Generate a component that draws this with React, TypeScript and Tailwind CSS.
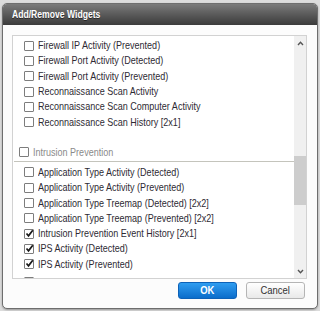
import React from "react";

const font = { fontFamily: '"Liberation Sans", Arial, sans-serif' };

function Box({ checked }: { checked?: boolean }) {
  return (
    <span className="relative w-[10px] h-[10px] shrink-0 border border-[#7d7d7d] rounded-[1px] bg-white">
      {checked && (
        <svg className="absolute left-[0px] top-[-1px]" width="9" height="9" viewBox="0 0 9 9">
          <path d="M1.5 4.5 L3.5 6.8 L7.8 1.2" fill="none" stroke="#1a1a1a" strokeWidth="1.7" />
        </svg>
      )}
    </span>
  );
}

function Row({ label, checked }: { label?: string; checked?: boolean }) {
  return (
    <div className="h-[15.3px] flex items-center pl-[10.5px] gap-[4px] text-[11px] text-[#2e2a33] whitespace-nowrap">
      <Box checked={checked} />
      {label && <span className="leading-none inline-block origin-left scale-x-[0.82]">{label}</span>}
    </div>
  );
}

const sec1 = [
  "Firewall IP Activity (Prevented)",
  "Firewall Port Activity (Detected)",
  "Firewall Port Activity (Prevented)",
  "Reconnaissance Scan Activity",
  "Reconnaissance Scan Computer Activity",
  "Reconnaissance Scan History [2x1]",
];

const sec2: [string, boolean][] = [
  ["Application Type Activity (Detected)", false],
  ["Application Type Activity (Prevented)", false],
  ["Application Type Treemap (Detected) [2x2]", false],
  ["Application Type Treemap (Prevented) [2x2]", false],
  ["Intrusion Prevention Event History [2x1]", true],
  ["IPS Activity (Detected)", true],
  ["IPS Activity (Prevented)", true],
];

export default function App() {
  return (
    <div className="w-[320px] h-[311px] bg-[#dcdcdc] pl-[2px] pt-[3px]" style={font}>
      <div className="w-[316px] h-[306px] rounded-[5px] border border-[#6e6e6e] bg-[#fcfcfc] overflow-hidden flex flex-col shadow-[0_1px_2px_rgba(0,0,0,0.3)]">
        <div className="h-[21px] shrink-0 bg-gradient-to-b from-[#7b7b7b] to-[#3b3b3b] flex items-center pl-[9px]">
          <span className="text-white font-bold text-[10px] inline-block origin-left scale-x-[0.86] [text-shadow:0_1px_0_rgba(0,0,0,0.5)]">
            Add/Remove Widgets
          </span>
        </div>
        <div className="ml-[9px] mt-[10px] w-[295px] h-[244px] border border-[#d2d2d2] bg-white flex overflow-hidden">
          <div className="flex-1 overflow-hidden pt-[2px]">
            {sec1.map((l) => (
              <Row key={l} label={l} />
            ))}
            <div className="mt-[14px] ml-[1px] h-[18px] border-b border-[#c4c4bc] flex items-center pl-[5px] gap-[4px] text-[11px] text-[#8a8a8a] whitespace-nowrap">
              <Box />
              <span className="leading-none inline-block origin-left scale-x-[0.82]">Intrusion Prevention</span>
            </div>
            <div className="pt-[3px]">
              {sec2.map(([l, c]) => (
                <Row key={l} label={l} checked={c} />
              ))}
              <div className="pt-[2px]">
                <Row />
              </div>
            </div>
          </div>
          <div className="w-[12px] shrink-0 bg-[#f0f0f0] flex flex-col">
            <div className="h-[14px] flex items-center justify-center">
              <svg width="7" height="5" viewBox="0 0 7 5">
                <path d="M1 4 L3.5 1.3 L6 4" fill="none" stroke="#555" strokeWidth="1.4" />
              </svg>
            </div>
            <div className="h-[106px]" />
            <div className="h-[49px] bg-[#cdcdcd]" />
            <div className="flex-1" />
            <div className="h-[14px] flex items-center justify-center">
              <svg width="7" height="5" viewBox="0 0 7 5">
                <path d="M1 1 L3.5 3.7 L6 1" fill="none" stroke="#555" strokeWidth="1.4" />
              </svg>
            </div>
          </div>
        </div>
        <div className="flex justify-end gap-[9px] pr-[12px] mt-[3px]">
          <button className="w-[59px] h-[17px] rounded-[3px] border border-[#0d62b8] bg-gradient-to-b from-[#2f9df0] to-[#0a6dcb] text-white font-bold text-[11px] leading-none">
            <span className="inline-block scale-x-[0.86]">OK</span>
          </button>
          <button className="w-[59px] h-[17px] rounded-[3px] border border-[#b5b5b5] bg-gradient-to-b from-white to-[#e9e9e9] text-[#333] text-[11px] leading-none">
            <span className="inline-block scale-x-[0.86]">Cancel</span>
          </button>
        </div>
      </div>
    </div>
  );
}
